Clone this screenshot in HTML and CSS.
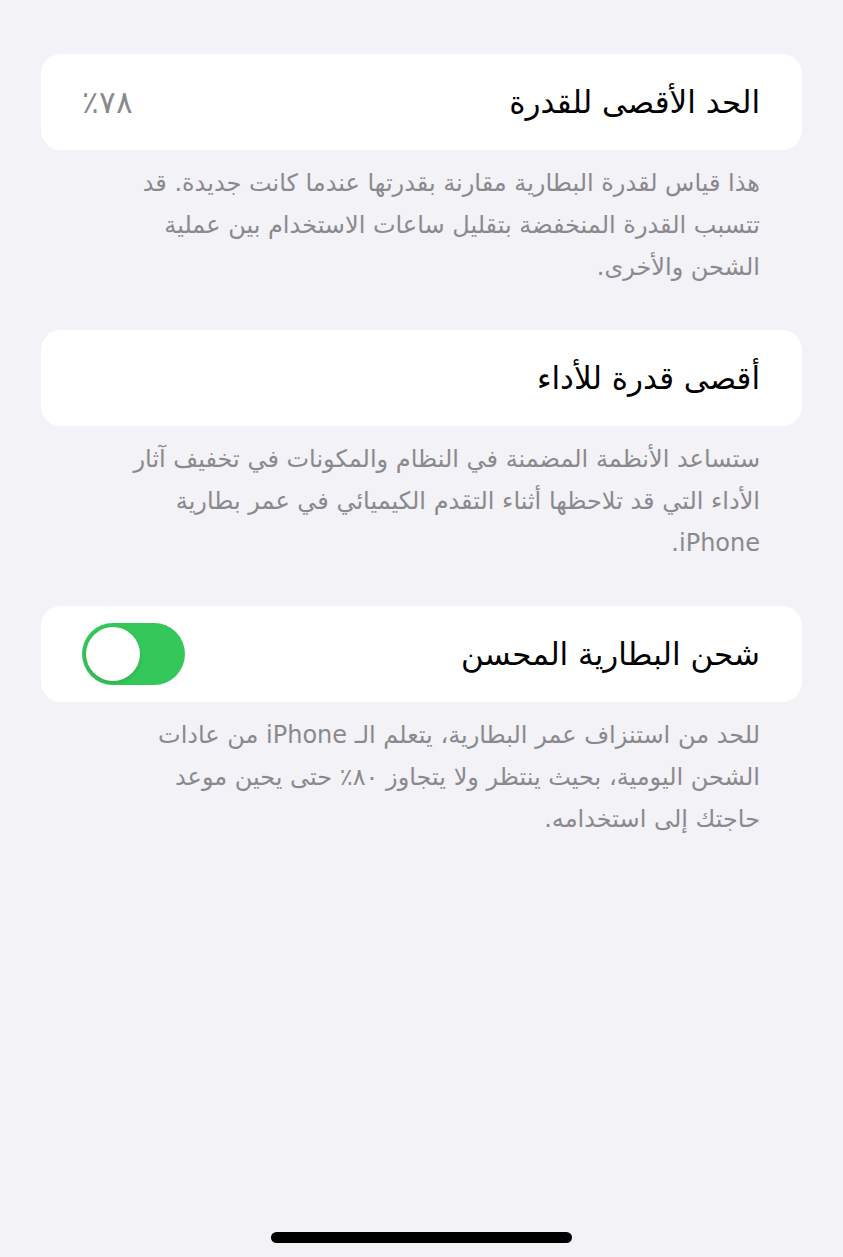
FILE: index.html
```html
<!DOCTYPE html>
<html lang="ar" dir="rtl">

  <head>
    <meta charset="UTF-8">
    <meta name="viewport" content="width=device-width, initial-scale=1.0">
    <title>صحة البطارية</title>
    <link rel="stylesheet" href="styles.css">
  </head>

  <body>
    <main class="settings">
      <section class="group">
        <div class="cell">
          <span class="cell-title">الحد الأقصى للقدرة</span>
          <span class="cell-value">٧٨٪</span>
        </div>
        <p class="footer">
          هذا قياس لقدرة البطارية مقارنة بقدرتها عندما كانت جديدة. قد تتسبب القدرة المنخفضة بتقليل ساعات الاستخدام بين عملية الشحن والأخرى.
        </p>
      </section>

      <section class="group">
        <div class="cell">
          <span class="cell-title">أقصى قدرة للأداء</span>
        </div>
        <p class="footer">
          ستساعد الأنظمة المضمنة في النظام والمكونات في تخفيف آثار الأداء التي قد تلاحظها أثناء التقدم الكيميائي في عمر بطارية iPhone.
        </p>
      </section>

      <section class="group">
        <div class="cell">
          <span class="cell-title">شحن البطارية المحسن</span>
          <!-- switch is on, so in rtl the knob sits on the left -->
          <span class="switch switch-on"><span class="knob"></span></span>
        </div>
        <p class="footer">
          للحد من استنزاف عمر البطارية، يتعلم الـ iPhone من عادات الشحن اليومية، بحيث ينتظر ولا يتجاوز ٨٠٪ حتى يحين موعد حاجتك إلى استخدامه.
        </p>
      </section>
    </main>

    <div class="home-bar"></div>
  </body>

</html>
```

FILE: styles.css
```css
html,
body {
  margin: 0;
  padding: 0;
  height: 100%;
}

body {
  background: #f2f2f7;
  font-family: "DejaVu Sans", "Noto Sans", sans-serif;
  overflow: hidden;
  display: flex;
  flex-direction: column;
}

.settings {
  flex: 1;
  padding: 54px 41px 0;
  display: flex;
  flex-direction: column;
  gap: 42px;
}

.group {
  margin: 0;
}

.cell {
  background: #fff;
  border-radius: 20px;
  height: 96px;
  box-sizing: border-box;
  padding: 0 42px 0 41px;
  display: flex;
  align-items: center;
  justify-content: space-between;
}

.cell-title {
  font-size: 31px;
  color: #000;
}

.cell-value {
  font-size: 31px;
  font-weight: 300;
  color: #8a8a8e;
}

.footer {
  margin: 12px 0 0;
  padding: 0 42px 0 75px;
  font-size: 24px;
  line-height: 42px;
  color: #8a8a8e;
}

/* ios style switch */
.switch {
  width: 103px;
  height: 62px;
  border-radius: 31px;
  background: #e9e9eb;
  box-sizing: border-box;
  padding: 4px;
  display: flex;
}

.switch-on {
  background: #34c759;
  justify-content: flex-end;
}

.knob {
  width: 54px;
  height: 54px;
  border-radius: 50%;
  background: #fff;
  box-shadow: 0 2px 4px rgba(0, 0, 0, 0.12);
}

.home-bar {
  align-self: center;
  width: 301px;
  height: 11px;
  border-radius: 6px;
  background: #000;
  margin-bottom: 14px;
}
```
